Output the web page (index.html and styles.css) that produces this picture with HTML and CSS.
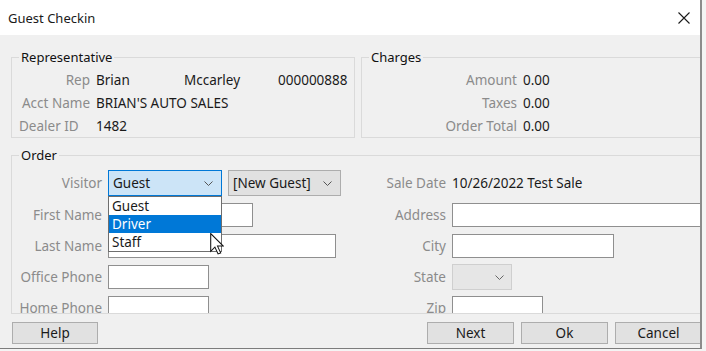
FILE: index.html
```html
<!DOCTYPE html>
<html lang="en">
<head>
  <meta charset="UTF-8" />
  <title>Guest Checkin</title>
  <link rel="stylesheet" href="styles.css">
</head>
<body>
  <div class="window">
    <div class="titlebar">
      <span class="title">Guest Checkin</span>
      <svg class="close" width="12" height="12" viewBox="0 0 12 12"><path d="M0.5 0.5 L11.5 11.5 M11.5 0.5 L0.5 11.5" stroke="#1a1a1a" stroke-width="1.1" fill="none"/></svg>
    </div>

    <div class="dialog">
      <div class="top-row">
        <fieldset class="group rep">
          <legend>Representative</legend>
          <div class="kv">
            <div class="kv-row"><span class="lbl">Rep</span><span class="val w88">Brian</span><span class="val w94">Mccarley</span><span class="val">000000888</span></div>
            <div class="kv-row"><span class="lbl">Acct Name</span><span class="val">BRIAN'S AUTO SALES</span></div>
            <div class="kv-row"><span class="lbl left">Dealer ID</span><span class="val">1482</span></div>
          </div>
        </fieldset>

        <fieldset class="group charges">
          <legend>Charges</legend>
          <div class="kv">
            <div class="kv-row"><span class="lbl">Amount</span><span class="val">0.00</span></div>
            <div class="kv-row"><span class="lbl">Taxes</span><span class="val">0.00</span></div>
            <div class="kv-row"><span class="lbl">Order Total</span><span class="val">0.00</span></div>
          </div>
        </fieldset>
      </div>

      <fieldset class="group order">
        <legend>Order</legend>
        <div class="order-body">
          <span class="lbl">Visitor</span>
          <div class="field combos">
            <div class="combo-wrap">
              <div class="combo active w114"><span>Guest</span><svg width="9" height="5" viewBox="0 0 9 5"><path d="M0.5 0.5 L4.5 4.5 L8.5 0.5" stroke="#555" fill="none"/></svg></div>
              <ul class="dropdown">
                <li>Guest</li>
                <li class="sel">Driver</li>
                <li>Staff</li>
              </ul>
            </div>
            <div class="combo w113"><span>[New Guest]</span><svg width="9" height="5" viewBox="0 0 9 5"><path d="M0.5 0.5 L4.5 4.5 L8.5 0.5" stroke="#555" fill="none"/></svg></div>
          </div>
          <span class="lbl">Sale Date</span>
          <span class="val">10/26/2022 Test Sale</span>

          <span class="lbl">First Name</span>
          <div class="field"><input type="text" class="tb w145"></div>
          <span class="lbl">Address</span>
          <div class="field"><input type="text" class="tb w260"></div>

          <span class="lbl">Last Name</span>
          <div class="field"><input type="text" class="tb w228"></div>
          <span class="lbl">City</span>
          <div class="field"><input type="text" class="tb w162"></div>

          <span class="lbl">Office Phone</span>
          <div class="field"><input type="text" class="tb w101"></div>
          <span class="lbl">State</span>
          <div class="field"><div class="combo disabled w60"><span></span><svg width="9" height="5" viewBox="0 0 9 5"><path d="M0.5 0.5 L4.5 4.5 L8.5 0.5" stroke="#666" fill="none"/></svg></div></div>

          <span class="lbl last">Home Phone</span>
          <div class="field"><input type="text" class="tb w101"></div>
          <span class="lbl last">Zip</span>
          <div class="field"><input type="text" class="tb w91"></div>
        </div>
      </fieldset>

      <div class="buttons">
        <button class="btn help">Help</button>
        <button class="btn">Next</button>
        <button class="btn">Ok</button>
        <button class="btn">Cancel</button>
      </div>
    </div>

    <svg class="cursor" width="14" height="22" viewBox="0 0 13 21"><path d="M0.5 0.5 L0.5 17.5 L4.5 13.5 L7.5 20 L10 19 L7 12.5 L12.5 12.5 Z" fill="#fff" stroke="#111" stroke-width="1" stroke-linejoin="miter"/></svg>
  </div>
</body>
</html>
```

FILE: styles.css
```css
body { margin: 0; background: #f4f4f4; font-family: "Noto Sans", "Open Sans", sans-serif; font-size: 13.5px; color: #1a1a1a; }
.window { width: 700px; height: 348px; background: #f0f0f0; border-right: 2px solid #8c8c8c; border-bottom: 1px solid #7c7c7c; overflow: hidden; position: relative; }

.titlebar { height: 35px; background: #fff; display: flex; align-items: center; justify-content: space-between; padding: 0 10px 0 8px; }
.title { font-size: 13px; }

.dialog { padding: 14px 0 0 11px; }
.top-row { display: flex; gap: 6px; }
.group { margin: 0; padding: 0; border: 1px solid #dadada; flex: none; min-width: 0; }
.group legend { margin-left: 7px; padding: 0 2px; line-height: 16px; font-size: 13px; color: #111; }
.rep { width: 342px; }
.charges { width: 345px; }

.kv { padding: 3px 0 0 7px; }
.kv-row { display: flex; align-items: center; height: 23px; white-space: nowrap; }
.lbl { color: #8b8b8b; text-align: right; padding-right: 6px; box-sizing: border-box; white-space: nowrap; }
.lbl.left { text-align: left; }
.lbl.last { align-self: start; padding-top: 3px; }
.rep .lbl { width: 77px; }
.charges .lbl { width: 154px; }
.val { color: #1a1a1a; white-space: nowrap; }
.w88 { width: 88px; }
.w94 { width: 94px; }

.order { width: 700px; margin-top: 9px; }
.order-body { height: 150px; overflow: hidden; box-sizing: border-box; padding: 7px 0 0 7px; display: grid; grid-template-columns: 89px 252px 92px 280px; grid-template-rows: 26px 24px 24px 24px 24px; row-gap: 7px; align-items: center; }
.field { display: flex; align-items: center; height: 100%; }
.combos { gap: 6px; }
.combo-wrap { position: relative; height: 100%; }

.combo { height: 26px; box-sizing: border-box; display: flex; align-items: center; justify-content: space-between; padding: 0 8px 0 4px; background: #e1e1e1; border: 1px solid #adadad; color: #1a1a1a; }
.combo.active { background: #cce4f7; border-color: #0078d7; }
.combo.disabled { background: #e6e6e6; border-color: #cfcfcf; padding-right: 7px; }

.dropdown { position: absolute; top: 26px; left: 0; width: 114px; box-sizing: border-box; margin: 0; padding: 0; list-style: none; background: #fff; border: 1px solid #6e6e6e; }
.dropdown li { height: 18px; line-height: 18px; padding-left: 3px; }
.dropdown li.sel { background: #0078d7; color: #fff; }

.tb { height: 24px; box-sizing: border-box; margin: 0; padding: 0 3px; border: 1px solid #8f8f8f; background: #fff; font: inherit; }
.w60 { width: 60px; }
.w91 { width: 91px; }
.w101 { width: 101px; }
.w113 { width: 113px; }
.w114 { width: 114px; }
.w145 { width: 145px; }
.w162 { width: 162px; }
.w228 { width: 228px; }
.w260 { width: 260px; }

.buttons { display: flex; gap: 7px; width: 690px; margin: 8px 0 0 1px; }
.btn { width: 87px; height: 22px; margin: 0; padding: 0; background: #e1e1e1; border: 1px solid #adadad; font: inherit; color: #1a1a1a; }
.help { width: 86px; margin-right: auto; }

.cursor { position: absolute; left: 210px; top: 233px; }
```
